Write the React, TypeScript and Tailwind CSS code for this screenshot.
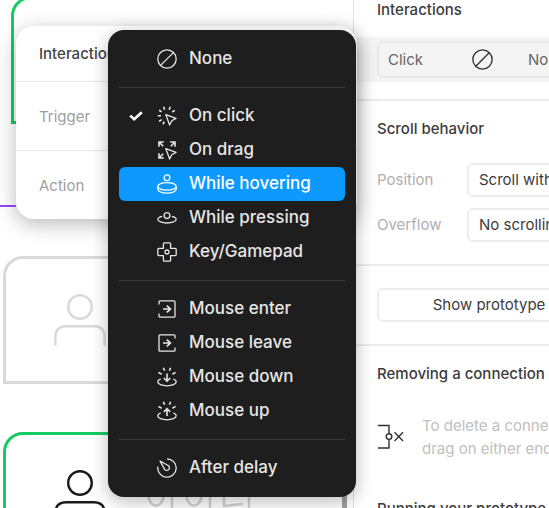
import React from 'react';

type IconProps = { children: React.ReactNode; className?: string };

const Icon = ({ children, className = 'size-5' }: IconProps) => (
  <svg
    viewBox="0 0 20 20"
    className={`${className} shrink-0`}
    fill="none"
    stroke="currentColor"
    strokeWidth="1.3"
    aria-hidden="true"
  >
    {children}
  </svg>
);

const NoneIcon = ({ className }: { className?: string }) => (
  <Icon className={className}>
    <circle cx="10" cy="10" r="9.2" />
    <path d="M3.6 16.4 16.4 3.6" />
  </Icon>
);

const POINTER = 'M8.8 8.6 19 12.4 14.8 14.8 12.6 19Z';

const ClickIcon = () => (
  <Icon>
    <path d={POINTER} strokeLinejoin="round" />
    <path
      d="M6.6.8 7.6 3.8M13.2.8 12.2 3.8M2 4.2 4.6 5.8M17.8 4.4 15.2 6M.8 9.8H4M2 15.4 4.8 13.6M6 18.4 7.2 15.6"
      strokeWidth="1.6"
    />
  </Icon>
);

const DragIcon = () => (
  <Icon>
    <path d={POINTER} strokeLinejoin="round" />
    <path
      d="M2 6.8V2H6.8M2 2 6.2 6.2M13.2 2H18V6.8M18 2 13.8 6.2M2 13.2V18H6.8M2 18 6.2 13.8"
      strokeWidth="1.6"
    />
  </Icon>
);

const HoverIcon = () => (
  <Icon>
    <circle cx="10" cy="3.8" r="2.9" />
    <ellipse cx="10" cy="12.4" rx="9.2" ry="3.8" />
    <path d="M.8 12.4V15C.8 17.4 5 19.2 10 19.2S19.2 17.4 19.2 15V12.4" />
  </Icon>
);

const PressIcon = () => (
  <Icon>
    <circle cx="10" cy="7.6" r="2.9" />
    <path d="M5.2 8.3C2.4 8.9.8 9.9.8 11.2.8 13.4 4.9 15 10 15S19.2 13.4 19.2 11.2C19.2 9.9 17.6 8.9 14.8 8.3" />
  </Icon>
);

const GamepadIcon = () => (
  <Icon>
    <path
      d="M7.4.8H12.6Q13.6.8 13.6 1.8V6.4H18.2Q19.2 6.4 19.2 7.4V12.6Q19.2 13.6 18.2 13.6H13.6V18.2Q13.6 19.2 12.6 19.2H7.4Q6.4 19.2 6.4 18.2V13.6H1.8Q.8 13.6.8 12.6V7.4Q.8 6.4 1.8 6.4H6.4V1.8Q6.4.8 7.4.8Z"
      strokeLinejoin="round"
    />
    <circle cx="10" cy="10" r="2" />
  </Icon>
);

const EnterIcon = () => (
  <Icon>
    <path d="M2 5.6V2.8Q2 1.8 3 1.8H17Q18 1.8 18 2.8V17.2Q18 18.2 17 18.2H3Q2 18.2 2 17.2V14.4" />
    <path d="M6 10H13.2M9.8 6.6 13.4 10 9.8 13.4" strokeWidth="1.7" />
  </Icon>
);

const LeaveIcon = () => (
  <Icon>
    <path d="M18 5.6V2.8Q18 1.8 17 1.8H3Q2 1.8 2 2.8V17.2Q2 18.2 3 18.2H17Q18 18.2 18 17.2V14.4" />
    <path d="M6 10H13.2M9.8 6.6 13.4 10 9.8 13.4" strokeWidth="1.7" />
  </Icon>
);

const RAYS = 'M6.4.8 7.6 3.8M13.6.8 12.4 3.8M1.4 5.4 4.6 7.2M18.6 5.4 15.4 7.2';
const DISH = 'M3.8 12C1.8 12.6.8 13.6.8 14.8.8 17.2 4.9 18.8 10 18.8S19.2 17.2 19.2 14.8C19.2 13.6 18.2 12.6 16.2 12';

const DownIcon = () => (
  <Icon>
    <path d={RAYS} strokeWidth="1.6" />
    <path d={DISH} />
    <path d="M10 6.6V14M6.8 11 10 14.2 13.2 11" strokeWidth="1.6" />
  </Icon>
);

const UpIcon = () => (
  <Icon>
    <path d={RAYS} strokeWidth="1.6" />
    <path d={DISH} />
    <path d="M10 15V7.8M6.8 11 10 7.6 13.2 11" strokeWidth="1.6" />
  </Icon>
);

const DelayIcon = () => (
  <Icon>
    <path d="M10 .8A9.2 9.2 0 1 1 .9 8.6" />
    <path d="M3 3 11.6 7.8A2.4 2.4 0 1 1 7.8 11.6Z" strokeLinejoin="round" />
  </Icon>
);

const MENU_GROUPS = [
  [{ label: 'None', icon: <NoneIcon /> }],
  [
    { label: 'On click', icon: <ClickIcon />, checked: true },
    { label: 'On drag', icon: <DragIcon /> },
    { label: 'While hovering', icon: <HoverIcon />, active: true },
    { label: 'While pressing', icon: <PressIcon /> },
    { label: 'Key/Gamepad', icon: <GamepadIcon /> },
  ],
  [
    { label: 'Mouse enter', icon: <EnterIcon /> },
    { label: 'Mouse leave', icon: <LeaveIcon /> },
    { label: 'Mouse down', icon: <DownIcon /> },
    { label: 'Mouse up', icon: <UpIcon /> },
  ],
  [{ label: 'After delay', icon: <DelayIcon /> }],
] as { label: string; icon: React.ReactNode; checked?: boolean; active?: boolean }[][];

const TriggerMenu = () => (
  <div
    role="menu"
    className="absolute left-[108px] top-[30px] w-[248px] rounded-2xl bg-[#1e1e1e] px-[11px] py-3 text-[#e6e6e6] shadow-[0_4px_18px_rgba(0,0,0,0.28)]"
  >
    {MENU_GROUPS.map((group, i) => (
      <div key={i}>
        {i > 0 && <hr className="my-[11px] border-[#383838]" />}
        {group.map((item) => (
          <button
            key={item.label}
            role="menuitem"
            className={`flex h-[34px] w-full items-center rounded-md text-left text-[17px] font-medium ${
              item.active ? 'bg-[#0d99ff] text-white' : ''
            }`}
          >
            <span className="flex w-[38px] shrink-0 pl-[10px]">
              {item.checked && (
                <svg viewBox="0 0 14 10" className="h-[10px] w-[14px]" fill="none" stroke="white" strokeWidth="2.6">
                  <path d="M1.2 4.6 5.2 8.2 12.8 1.2" />
                </svg>
              )}
            </span>
            {item.icon}
            <span className="pl-3">{item.label}</span>
          </button>
        ))}
      </div>
    ))}
  </div>
);

const DetailsDialog = () => (
  <div className="absolute left-4 top-[26px] w-[341px] rounded-[18px] bg-white text-[15px] text-[#a0a0a0] shadow-[0_5px_20px_rgba(0,0,0,0.28)]">
    <h2 className="flex h-14 items-center border-b border-[#e6e6e6] px-[23px] pt-0.5 font-medium text-[#444]">
      Interaction details
    </h2>
    <div className="flex h-[69px] items-center border-b border-[#e6e6e6] px-[23px] pt-0.5">Trigger</div>
    <div className="flex h-[68px] items-center px-[23px] pt-0.5">Action</div>
  </div>
);

const Person = ({ className }: { className: string }) => (
  <svg viewBox="0 0 52 52" className={className} fill="none" stroke="currentColor" strokeWidth="2.4">
    <circle cx="26" cy="13" r="11.8" />
    <path d="M1.4 51.5V43Q1.4 32.2 12.2 32.2H39.8Q50.6 32.2 50.6 43V51.5" />
  </svg>
);

const Canvas = () => (
  <div className="relative w-[353px] shrink-0 overflow-hidden bg-white">
    <div className="absolute -top-1 left-[11px] h-32 w-96 rounded-tl-[20px] border-3 border-[#14cc66]" />
    <div className="absolute left-0 top-[205px] h-0.5 w-4 bg-[#9747ff]" />
    <div className="absolute left-[3px] top-64 h-32 w-80 rounded-tl-[20px] border-3 border-[#d9d9d9]">
      <Person className="absolute left-12 top-[35px] size-[52px] text-[#d9d9d9]" />
    </div>
    <div className="absolute left-[3px] top-[432px] h-32 w-96 rounded-tl-[20px] border-3 border-[#14cc66]">
      <Person className="absolute left-12 top-[35px] size-[52px] text-[#1a1a1a]" />
    </div>
    <svg
      viewBox="0 0 108 20"
      className="absolute left-[145px] top-[488px] h-5 w-[108px]"
      fill="none"
      stroke="#d2d2d2"
      strokeWidth="2.4"
    >
      <path d="M3 4C3 22 19 22 19 4M27 0V20M41 4C41 22 57 22 57 4M65 0V20M79 0V18L98 16M104 0V20" />
    </svg>
    <div className="absolute bottom-0 left-[342px] h-16 w-[5px] bg-[#a0a0a0]" />
  </div>
);

type SelectRowProps = { id: string; label: string; value: string };

const SelectRow = ({ id, label, value }: SelectRowProps) => (
  <div className="flex h-[34px] items-center">
    <label htmlFor={id} className="w-[90px] shrink-0 text-[#b0b0b0]">
      {label}
    </label>
    <select id={id} className="h-full flex-1 appearance-none rounded-md border-2 border-[#ececec] bg-white px-[10px]">
      <option>{value}</option>
    </select>
  </div>
);

const RemoveConnectionIcon = () => (
  <svg viewBox="0 0 28 26" className="h-[26px] w-7 shrink-0" fill="none" stroke="#333" strokeWidth="1.4">
    <path d="M1 1.5H12V9.6M12 15.6V24H1" />
    <circle cx="12" cy="12.6" r="2.8" />
    <path d="M17.5 8.2 26 17M26 8.2 17.5 17" />
  </svg>
);

const Sidebar = () => (
  <aside className="min-w-0 flex-1 overflow-hidden border-l border-[#e0e0e0] bg-white">
    <div className="w-[330px] text-[15px] leading-[22px] text-[#3c3c3c]">
      <section className="border-b-2 border-[#ececec] pb-[17px]">
        <h2 className="-mt-px px-[23px] pb-4 font-medium">Interactions</h2>
        <div className="bg-[#f4f4f4] px-[23px] py-1">
          <button className="flex h-[37px] w-full items-center rounded-md border-2 border-[#e8e8e8] pl-[9px] text-[#666]">
            <span className="w-[84px] text-left">Click</span>
            <NoneIcon className="size-[21px] text-[#333]" />
            <span className="pl-[35px]">None</span>
          </button>
        </div>
      </section>
      <section className="border-b-2 border-[#ececec] px-[23px] pb-[22px] pt-[17px]">
        <h2 className="pb-[23px] font-medium">Scroll behavior</h2>
        <div className="flex flex-col gap-[11px]">
          <SelectRow id="position" label="Position" value="Scroll with parent" />
          <SelectRow id="overflow" label="Overflow" value="No scrolling" />
        </div>
      </section>
      <section className="border-b-2 border-[#ececec] px-[23px] py-[22px]">
        <button className="h-[34px] w-full rounded-md border-2 border-[#ececec]">Show prototype settings</button>
      </section>
      <section className="px-[23px] pt-[17px]">
        <h2 className="font-medium">Removing a connection</h2>
        <div className="flex items-center gap-[17px] pb-7 pt-[29px]">
          <RemoveConnectionIcon />
          <p className="leading-[23px] text-[#c0c0c0]">
            To delete a connection, click and
            <br />
            drag on either end.
          </p>
        </div>
        <h2 className="pt-[10px] font-medium">Running your prototype</h2>
      </section>
    </div>
  </aside>
);

export default function App() {
  return (
    <main className="relative flex h-screen overflow-hidden bg-white font-[Inter,sans-serif]">
      <Canvas />
      <Sidebar />
      <DetailsDialog />
      <TriggerMenu />
    </main>
  );
}
